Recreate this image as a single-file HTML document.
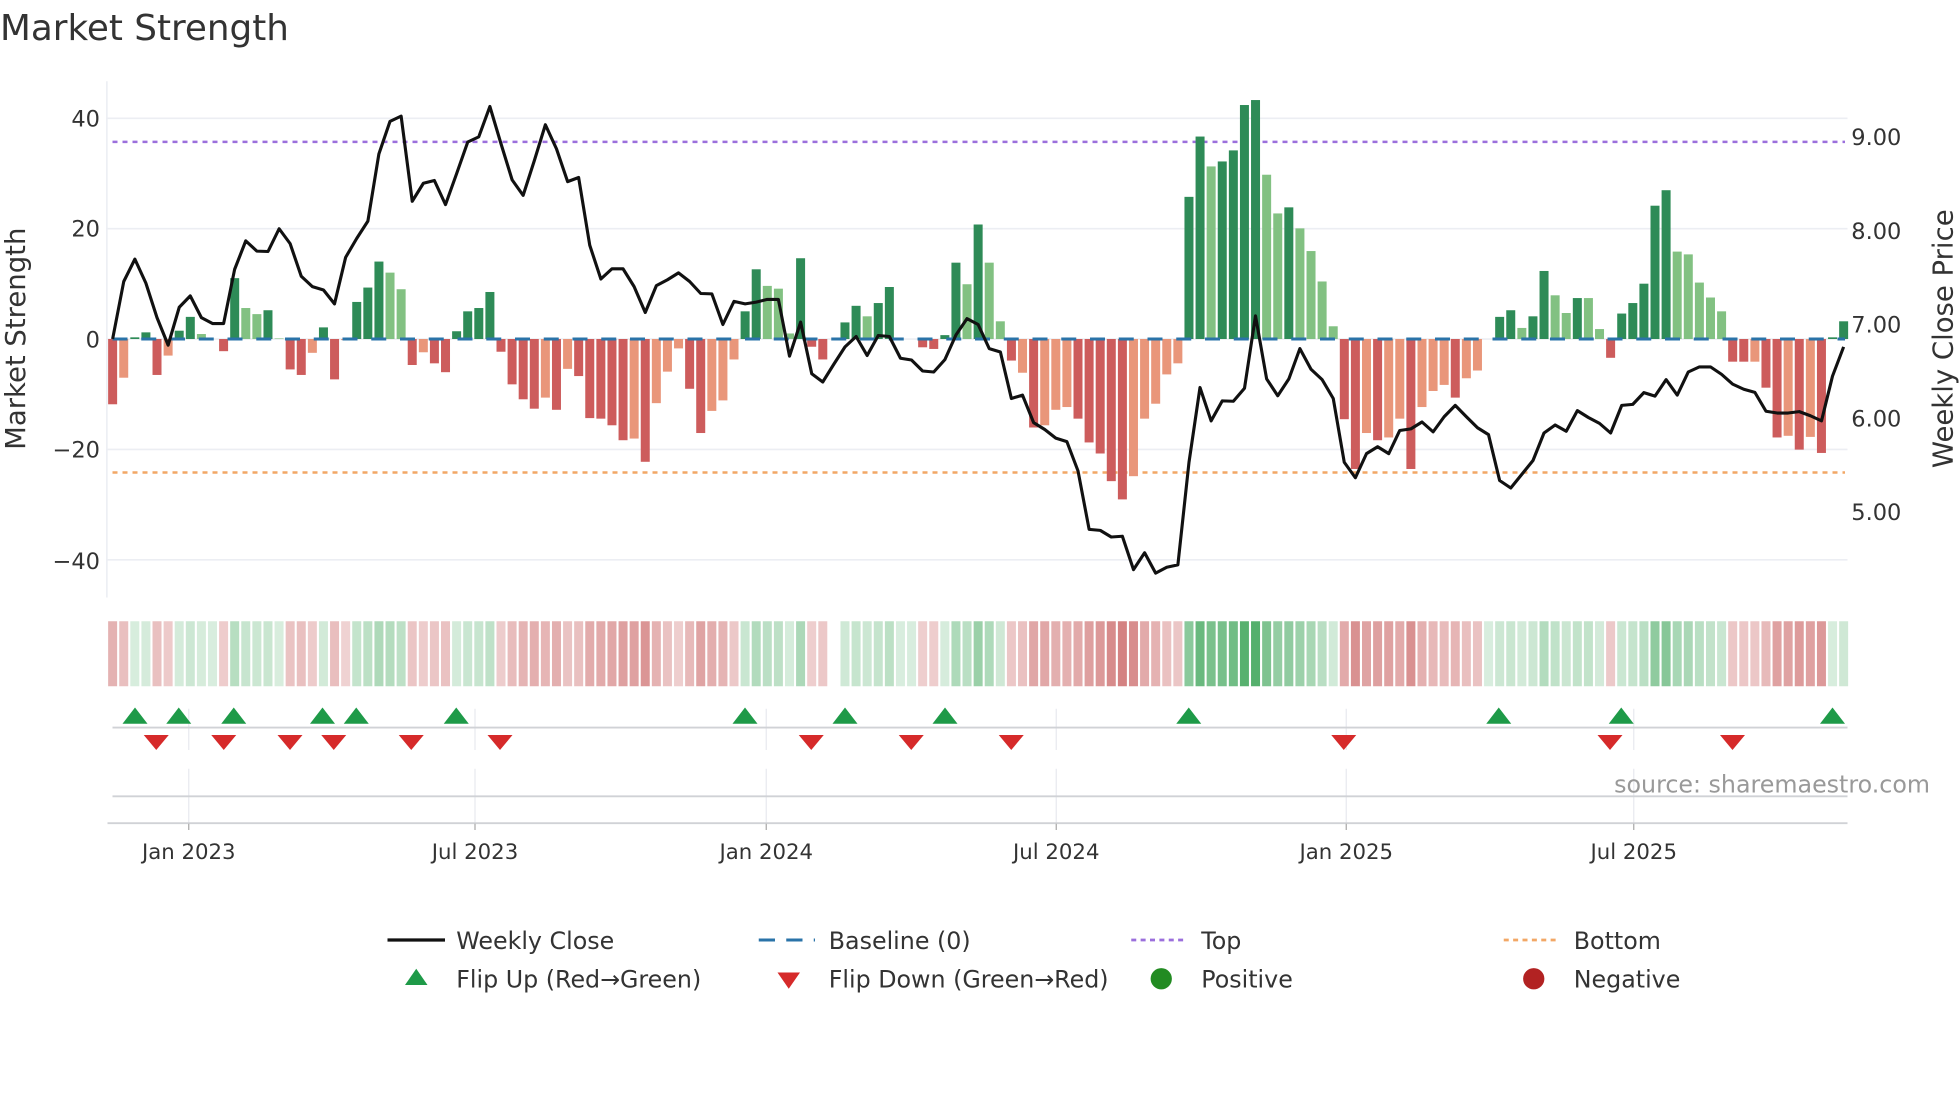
<!DOCTYPE html>
<html><head><meta charset="utf-8">
<style>
html,body{margin:0;padding:0;background:#fff;}
svg{display:block;}
text{font-family:"DejaVu Sans","Liberation Sans",sans-serif;fill:#333;}
</style></head>
<body>
<svg id="s" width="1960" height="1102" viewBox="0 0 1568 881.6" xmlns="http://www.w3.org/2000/svg">
<text x="0" y="32" font-size="28.6">Market Strength</text>
<g id="grid" stroke="#eceef3" stroke-width="1.3">
<line x1="85" y1="94.6" x2="1478" y2="94.6"/>
<line x1="85" y1="182.9" x2="1478" y2="182.9"/>
<line x1="85" y1="271.2" x2="1478" y2="271.2"/>
<line x1="85" y1="359.5" x2="1478" y2="359.5"/>
<line x1="85" y1="447.8" x2="1478" y2="447.8"/>
<line x1="85.5" y1="65" x2="85.5" y2="478"/>
</g>
<g font-size="18" text-anchor="end">
<text x="80" y="101">40</text>
<text x="80" y="189">20</text>
<text x="80" y="278">0</text>
<text x="80" y="366">−20</text>
<text x="80" y="455">−40</text>
</g>
<g font-size="18">
<text x="1481" y="116">9.00</text>
<text x="1481" y="191">8.00</text>
<text x="1481" y="266">7.00</text>
<text x="1481" y="341">6.00</text>
<text x="1481" y="416">5.00</text>
</g>
<text font-size="22" text-anchor="middle" transform="translate(20,271) rotate(-90)">Market Strength</text>
<text font-size="22" text-anchor="middle" transform="translate(1562,271) rotate(-90)">Weekly Close Price</text>
<line x1="90" y1="113.5" x2="1476" y2="113.5" stroke="#9b6fdc" stroke-width="2" stroke-dasharray="4,4"/>
<line x1="90" y1="378" x2="1476" y2="378" stroke="#f2a766" stroke-width="2" stroke-dasharray="4,4"/>
<g id="bars"></g>
<line x1="90" y1="271.2" x2="1476" y2="271.2" stroke="#2a73a8" stroke-width="2.4" stroke-dasharray="12,11"/>
<polyline id="line" fill="none" stroke="#111" stroke-width="2.5" stroke-linejoin="round"/>
<g id="strip"></g>
<g stroke="#e8eaef" stroke-width="1">
<line x1="151" y1="567" x2="151" y2="600"/><line x1="380" y1="567" x2="380" y2="600"/><line x1="613" y1="567" x2="613" y2="600"/><line x1="845" y1="567" x2="845" y2="600"/><line x1="1077" y1="567" x2="1077" y2="600"/><line x1="1307" y1="567" x2="1307" y2="600"/>
<line x1="151" y1="615" x2="151" y2="658"/><line x1="380" y1="615" x2="380" y2="658"/><line x1="613" y1="615" x2="613" y2="658"/><line x1="845" y1="615" x2="845" y2="658"/><line x1="1077" y1="615" x2="1077" y2="658"/><line x1="1307" y1="615" x2="1307" y2="658"/>
</g>
<line x1="90" y1="582" x2="1478" y2="582" stroke="#d0d2d6" stroke-width="1.5"/>
<line x1="90" y1="637" x2="1478" y2="637" stroke="#d0d2d6" stroke-width="1.5"/>
<line x1="86" y1="658.5" x2="1478" y2="658.5" stroke="#d0d2d6" stroke-width="1.5"/>
<g stroke="#aaa" stroke-width="1">
<line x1="151" y1="659" x2="151" y2="664"/><line x1="380" y1="659" x2="380" y2="664"/><line x1="613" y1="659" x2="613" y2="664"/><line x1="845" y1="659" x2="845" y2="664"/><line x1="1077" y1="659" x2="1077" y2="664"/><line x1="1307" y1="659" x2="1307" y2="664"/>
</g>
<g id="marks"></g>
<text x="1544" y="634" font-size="19" text-anchor="end" style="fill:#999">source: sharemaestro.com</text>
<g font-size="17" text-anchor="middle">
<text x="151" y="687">Jan 2023</text><text x="380" y="687">Jul 2023</text><text x="613" y="687">Jan 2024</text><text x="845" y="687">Jul 2024</text><text x="1077" y="687">Jan 2025</text><text x="1307" y="687">Jul 2025</text>
</g>
<g font-size="19">
<line x1="310" y1="752" x2="356" y2="752" stroke="#111" stroke-width="2.6"/>
<text x="365" y="759">Weekly Close</text>
<line x1="607" y1="752" x2="652" y2="752" stroke="#2a73a8" stroke-width="2.4" stroke-dasharray="13,9"/>
<text x="663" y="759">Baseline (0)</text>
<line x1="905" y1="752" x2="950" y2="752" stroke="#9b6fdc" stroke-width="2.2" stroke-dasharray="4,3.5"/>
<text x="961" y="759">Top</text>
<line x1="1203" y1="752" x2="1248" y2="752" stroke="#f2a766" stroke-width="2.2" stroke-dasharray="4,3.5"/>
<text x="1259" y="759">Bottom</text>
<polygon points="324,788 342,788 333,775" fill="#1e9a48"/>
<text x="365" y="790">Flip Up (Red→Green)</text>
<polygon points="622,778 640,778 631,791" fill="#d62a2a"/>
<text x="663" y="790">Flip Down (Green→Red)</text>
<circle cx="929" cy="783" r="8.5" fill="#228b22"/>
<text x="961" y="790">Positive</text>
<circle cx="1227" cy="783" r="8.5" fill="#b22222"/>
<text x="1259" y="790">Negative</text>
</g>
</svg>
<script>
var B="-11.8R -7r 0.3G 1.2G -6.5R -3r 1.5G 4G 0.9g 0G -2.2R 11G 5.6g 4.5g 5.2G 0.1g -5.5R -6.5R -2.5r 2.1G -7.3R -0.2r 6.7G 9.3G 14G 12g 9g -4.7R -2.4r -4.4R -6R 1.4G 5G 5.6G 8.5G -2.3R -8.2R -10.9R -12.6R -10.6r -12.8R -5.4r -6.7R -14.3R -14.4R -15.6R -18.3R -18r -22.2R -11.6r -5.9r -1.7r -9R -17R -13r -11.1r -3.7r 5G 12.6G 9.6g 9.1g 1g 14.6G -1.4R -3.7R 0X 3G 6G 4.1g 6.5G 9.4G 0G 0G -1.5R -1.8R 0.7G 13.8G 9.9g 20.7G 13.8g 3.2g -3.9R -6.1r -16R -15.6r -12.8r -12.3r -14.4R -18.7R -20.7R -25.7R -29R -24.8r -14.4r -11.7r -6.4r -4.4r 25.7G 36.6G 31.2g 32.1G 34.1G 42.3G 43.2G 29.7g 22.7g 23.8G 20g 15.9g 10.4g 2.3g -14.5R -23.5R -17r -18.3R -17.8r -14.4r -23.5R -12.3r -9.4r -8.3r -10.6R -7.1r -5.7r 0G 4G 5.2G 2g 4.1G 12.3G 7.9g 4.7g 7.4G 7.4g 1.8g -3.4R 4.6G 6.5G 10G 24.1G 26.9G 15.8g 15.3g 10.2g 7.5g 5g -4.1R -4.1R -4.1r -8.8R -17.8R -17.5r -20R -17.7r -20.6R 0.3G 3.2G".split(" ");
var L=[752,585,520,590,690,770,660,627,690,707,707,550,467,497,498,432,475,570,600,610,650,515,460,410,215,120,105,352,300,292,362,272,180,165,77,185,290,335,235,130,200,295,283,480,578,548,548,600,675,597,580,560,585,620,621,710,643,650,645,637,637,802,703,853,877,825,775,745,800,742,745,808,813,845,848,812,740,693,710,780,790,925,915,995,1015,1040,1050,1135,1305,1308,1327,1325,1422,1373,1432,1415,1408,1110,893,990,932,933,895,685,868,917,868,780,840,870,925,1110,1155,1085,1065,1085,1018,1013,993,1022,978,945,978,1010,1030,1163,1185,1145,1105,1025,1002,1020,960,980,997,1025,945,942,908,918,870,915,848,833,833,855,883,898,907,962,967,967,963,975,990,860,775];
var col={G:"#2e8b57",g:"#82c182",R:"#cd5c5c",r:"#e9967a"};
var ns="http://www.w3.org/2000/svg";
function el(p,t,a){var e=document.createElementNS(ns,t);for(var k in a)e.setAttribute(k,a[k]);p.appendChild(e);return e;}
var bars=document.getElementById("bars"),strip=document.getElementById("strip");
var P=8.877,X0=90.1,Z=271.2,U=4.425;
var pts=[];
for(var i=0;i<B.length;i++){
 var s=B[i],c=s.slice(-1),v=parseFloat(s);
 var x=X0+i*P;
 var h=Math.abs(v)*U;
 if(h>0.3) el(bars,"rect",{x:(x-3.6).toFixed(2),y:(v>0?Z-h:Z).toFixed(2),width:7.2,height:h.toFixed(2),fill:col[c]});
 var a=Math.abs(v),fill;
 if(c=="X") fill="#fff";
 else if(c=="G"||c=="g"){var t=0.18+0.62*Math.min(a/44,1);fill="rgb("+Math.round(255-t*(255-40))+","+Math.round(255-t*(255-155))+","+Math.round(255-t*(255-70))+")";}
 else {var t=0.28+0.5*Math.min(a/29,1);fill="rgb("+Math.round(255-t*(255-200))+","+Math.round(255-t*(255-95))+","+Math.round(255-t*(255-95))+")";}
 el(strip,"rect",{x:(x-3.6).toFixed(2),y:497,width:7.2,height:52,fill:fill});
 pts.push(x.toFixed(1)+","+((80+L[i]/2.904)/1.25).toFixed(1));
}
document.getElementById("line").setAttribute("points",pts.join(" "));
var m=document.getElementById("marks");
[108,143,187,258,285,365,596,676,756,951,1199,1297,1466].forEach(function(x){el(m,"polygon",{points:(x-10)+",579 "+(x+10)+",579 "+x+",566",fill:"#1e9a48"});});
[125,179,232,267,329,400,649,729,809,1075,1288,1386].forEach(function(x){el(m,"polygon",{points:(x-10)+",588 "+(x+10)+",588 "+x+",600",fill:"#d62a2a"});});
</script>
</body></html>
